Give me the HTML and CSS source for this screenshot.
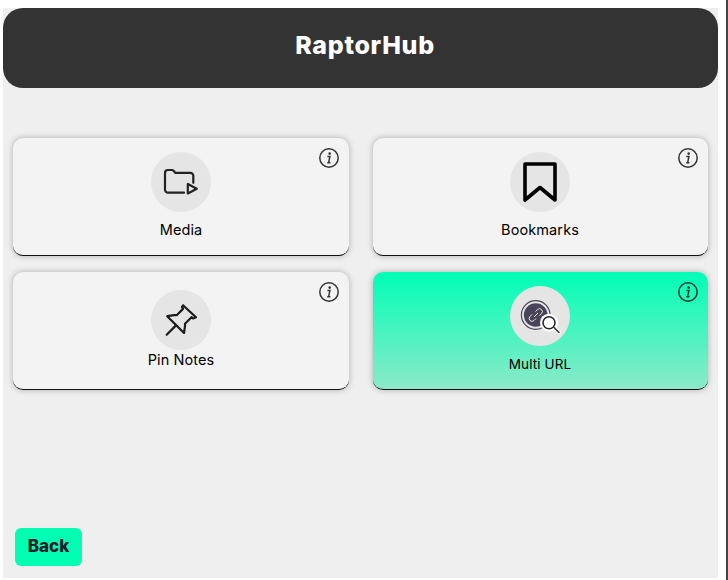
FILE: index.html
```html
<!DOCTYPE html>
<html lang="en">
<head>
    <meta charset="UTF-8">
    <meta name="viewport" content="width=device-width, initial-scale=1.0">
    <title>RaptorHub</title>
    <link rel="stylesheet" href="styles.css">
</head>
<body>
    <div class="app">
        <header class="topbar">
            <h1>RaptorHub</h1>
        </header>

        <main class="grid">
            <div class="card card-media">
                <svg class="info" viewBox="0 0 20 20"><circle cx="10" cy="10" r="9.2"/><circle class="dot" cx="10.7" cy="5.6" r="1.3"/><path d="M8.4 8.6h2.5l-1.3 6.2h-1.400h3.200"/></svg>
                <div class="circle">
                    <svg class="icon" viewBox="0 0 60 60"><path class="thin" d="M33 40.700H17a3 3 0 0 1-3-3V21a3 3 0 0 1 3-3h4a2 2 0 0 1 1.600.800l1.600 2H39.300a3 3 0 0 1 3 3v7"/><path class="thin" d="M36.800 32v9.500l9-4.800z"/></svg>
                </div>
                <span class="label">Media</span>
            </div>

            <div class="card card-bookmarks">
                <svg class="info" viewBox="0 0 20 20"><circle cx="10" cy="10" r="9.2"/><circle class="dot" cx="10.7" cy="5.6" r="1.3"/><path d="M8.4 8.6h2.500l-1.300 6.200h-1.400h3.200"/></svg>
                <div class="circle">
                    <svg class="icon" viewBox="0 0 60 60"><path class="thick" d="M15 12h30v36L30 35.500 15 48z"/></svg>
                </div>
                <span class="label">Bookmarks</span>
            </div>

            <div class="card card-pin">
                <svg class="info" viewBox="0 0 20 20"><circle cx="10" cy="10" r="9.2"/><circle class="dot" cx="10.7" cy="5.6" r="1.3"/><path d="M8.4 8.6h2.500l-1.300 6.200h-1.400h3.200"/></svg>
                <div class="circle">
                    <svg class="icon" viewBox="0 0 60 60"><path class="pin" d="M32 15.300L45 27.300l-3 1.200-1.500-1.300-6.500 6.500 0 2.500-1 6.800-7-7-9.800-9.800 7-1 2.500 0 6.300-6.300-1-1.800z"/><path class="pin" d="M15.700 44.700l9.300-9.300"/></svg>
                </div>
                <span class="label">Pin Notes</span>
            </div>

            <div class="card card-url">
                <svg class="info info-dark" viewBox="0 0 20 20"><circle cx="10" cy="10" r="9.2"/><circle class="dot" cx="10.7" cy="5.6" r="1.3"/><path d="M8.4 8.6h2.500l-1.300 6.200h-1.400h3.200"/></svg>
                <div class="circle">
                    <svg class="icon" viewBox="0 0 60 60">
                        <circle class="ring" cx="25.700" cy="29" r="14.300"/>
                        <circle class="disc" cx="25.700" cy="29" r="11.800"/>
                        <path class="chain" d="M24 31l4-4M22 28.500l-2 2a2.800 2.800 0 0 0 4 4l2-2M29.500 29.500l2-2a2.800 2.800 0 0 0-4-4l-2 2"/>
                        <circle class="lens-back" cx="39" cy="36.700" r="9"/>
                        <path class="handle-back" d="M44 41.500l5 5"/>
                        <circle class="lens-edge" cx="39" cy="36.700" r="6.800"/>
                        <circle class="lens" cx="39" cy="36.700" r="5.200"/>
                        <path class="handle" d="M44 41.500l5 5"/>
                    </svg>
                </div>
                <span class="label label-url">Multi URL</span>
            </div>
        </main>

        <footer class="bottom">
            <button type="button" class="back">Back</button>
        </footer>
    </div>
    <div class="edge"></div>
</body>
</html>
```

FILE: styles.css
```css
html, body {
    height: 100%;
}

body {
    margin: 0;
    padding: 8px 0 2px 3px;
    box-sizing: border-box;
    background-color: white;
    font-family: Inter, "Open Sans", sans-serif;
    color: black;
    display: flex;
    overflow: hidden;
}

.app {
    width: 715px;
    background-color: #efefef;
    display: flex;
    flex-direction: column;
}

.edge {
    width: 2px;
    margin-left: 8px;
    margin-top: -8px;
    margin-bottom: -2px;
    background-color: #444;
}

.topbar {
    height: 80px;
    background-color: #333333;
    border-radius: 20px;
    display: flex;
    align-items: center;
    justify-content: center;
    padding-left: 9px;
    box-sizing: border-box;
}

.topbar h1 {
    margin: 0 0 6px;
    font-size: 25px;
    font-weight: 800;
    letter-spacing: 0.7px;
    color: white;
}

.grid {
    display: grid;
    grid-template-columns: 336px 335px;
    column-gap: 24px;
    row-gap: 16px;
    padding: 50px 10px 0;
}

.card {
    position: relative;
    height: 118px;
    box-sizing: border-box;
    background-color: #f3f3f3;
    border-radius: 10px;
    border-bottom: 1px solid #111;
    box-shadow: 0 0 6px rgba(0, 0, 0, 0.28);
    display: flex;
    flex-direction: column;
    align-items: center;
    padding-top: 14px;
}

.card-bookmarks,
.card-url {
    padding-right: 1px;
}

.card-media .label,
.card-bookmarks .label,
.card-url .label {
    margin-top: 8px;
}

.card-pin {
    padding-top: 18px;
}

.card-pin .label {
    margin-top: 0;
}

.card-url {
    background: linear-gradient(to bottom, #00ffb7, #8ce9c8);
}

.circle {
    width: 60px;
    height: 60px;
    border-radius: 50%;
    background-color: #e5e5e5;
}

.icon {
    display: block;
    width: 60px;
    height: 60px;
}

.label {
    font-size: 14.5px;
    letter-spacing: 0.1px;
    line-height: 20px;
}

.label-url {
    font-size: 13.5px;
}

.info {
    position: absolute;
    top: 10px;
    right: 10px;
    width: 20px;
    height: 20px;
}

.info circle {
    fill: none;
    stroke: #333;
    stroke-width: 1.5;
}

.info circle.dot {
    fill: #333;
    stroke: none;
}

.info path {
    fill: none;
    stroke: #333;
    stroke-width: 1.5;
}

.info-dark circle {
    stroke: #08362c;
}

.info-dark path {
    stroke: #08362c;
}

.info-dark circle.dot {
    fill: #08362c;
}

.thin {
    fill: none;
    stroke: #222;
    stroke-width: 2.2;
    stroke-linecap: round;
    stroke-linejoin: round;
}

.thick {
    fill: none;
    stroke: black;
    stroke-width: 3.6;
    stroke-linejoin: round;
}

.pin {
    fill: none;
    stroke: #1c1c1c;
    stroke-width: 2.2;
    stroke-linecap: round;
    stroke-linejoin: round;
}

.ring {
    fill: none;
    stroke: #4a4458;
    stroke-width: 1.2;
}

.disc {
    fill: #4a4458;
}

.chain {
    fill: none;
    stroke: #e5e5e5;
    stroke-width: 1;
}

.lens-back {
    fill: white;
}

.lens-edge {
    fill: #2a2733;
}

.lens {
    fill: white;
}

.handle-back {
    fill: none;
    stroke: white;
    stroke-width: 3.5;
    stroke-linecap: round;
}

.handle {
    fill: none;
    stroke: #333;
    stroke-width: 1.6;
    stroke-linecap: round;
}

.bottom {
    margin-top: auto;
    padding: 0 0 12px 12px;
}

.back {
    display: block;
    width: 67px;
    height: 38px;
    border: none;
    border-radius: 6px;
    background-color: #00ffb3;
    color: #1b1b2b;
    font-family: inherit;
    font-size: 17px;
    font-weight: 800;
    padding: 0 0 2px;
}
```
